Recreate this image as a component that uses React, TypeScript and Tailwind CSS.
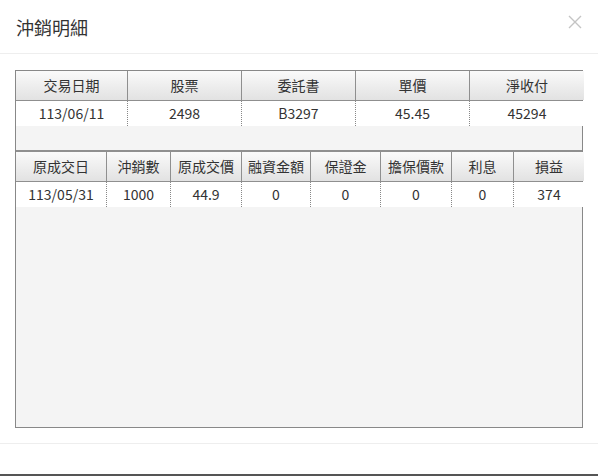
import React from "react";

const font = { fontFamily: '"Noto Sans CJK TC", "Noto Sans", sans-serif' };

const t1Head = ["交易日期", "股票", "委託書", "單價", "淨收付"];
const t1Data = ["113/06/11", "2498", "B3297", "45.45", "45294"];
const t1Cols = "grid-cols-[112px_114px_114px_114px_114px]";

const t2Head = ["原成交日", "沖銷數", "原成交價", "融資金額", "保證金", "擔保價款", "利息", "損益"];
const t2Data = ["113/05/31", "1000", "44.9", "0", "0", "0", "0", "374"];
const t2Cols = "grid-cols-[91px_64px_71px_69px_70px_71px_62px_70px]";

function HeadRow({ items, cols }: { items: string[]; cols: string }) {
  return (
    <div className={`grid ${cols} h-[30px] border-b border-[#8f8f8f]`}>
      {items.map((h, i) => (
        <div
          key={i}
          className={`flex items-center justify-center text-[14px] text-[#333] bg-gradient-to-b from-[#fafafa] to-[#e2e2e2] ${
            i < items.length - 1 ? "border-r border-[#8f8f8f]" : ""
          }`}
        >
          {h}
        </div>
      ))}
    </div>
  );
}

function DataRow({ items, cols }: { items: string[]; cols: string }) {
  return (
    <div className={`grid ${cols} h-[25px]`}>
      {items.map((d, i) => (
        <div
          key={i}
          className={`flex items-center justify-center text-[14px] text-[#333] bg-white ${
            i < items.length - 1 ? "border-r border-dotted border-[#888]" : ""
          }`}
        >
          {d}
        </div>
      ))}
    </div>
  );
}

export default function App() {
  return (
    <div className="w-[598px] h-[476px] bg-white flex flex-col overflow-hidden" style={font}>
      <div className="h-[54px] border-b border-[#eeeeee] flex items-center justify-between pl-[16px] pr-[16px] shrink-0">
        <span className="text-[18px] text-[#333] leading-none">沖銷明細</span>
        <svg width="14" height="14" viewBox="0 0 14 14" className="mb-[10px]">
          <path d="M1 1 L13 13 M13 1 L1 13" stroke="#c4c4c4" strokeWidth="1.4" />
        </svg>
      </div>
      <div className="px-[15px] pt-[16px] shrink-0">
        <div className="h-[358px] border border-[#888] bg-[#f4f4f4] flex flex-col">
          <HeadRow items={t1Head} cols={t1Cols} />
          <DataRow items={t1Data} cols={t1Cols} />
          <div className="h-[24px]" />
          <div className="border-t-2 border-[#8f8f8f]">
            <HeadRow items={t2Head} cols={t2Cols} />
            <DataRow items={t2Data} cols={t2Cols} />
          </div>
        </div>
      </div>
      <div className="mt-[15px] border-t border-[#eeeeee] flex-1" />
      <div className="h-[2px] bg-[#555] shrink-0" />
    </div>
  );
}
